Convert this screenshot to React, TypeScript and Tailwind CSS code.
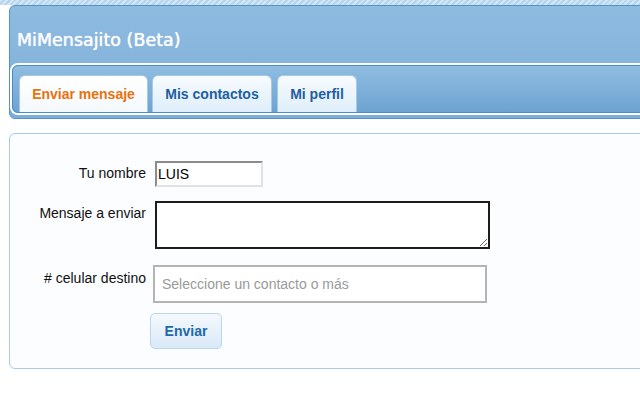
import React from "react";

/**
 * MiMensajito (Beta) — the "send a message" screen.
 * A blue framed header with tabs, then a light form panel.
 */
export default function App() {
  return (
    <div className="h-[400px] w-[640px] overflow-hidden bg-white font-['Liberation_Sans',Arial,sans-serif]">
      {/* hatched strip along the very top */}
      <div className="h-[5px] bg-[repeating-linear-gradient(135deg,#d3e6f5_0px,#d3e6f5_2px,#b7d4ed_2px,#b7d4ed_4px)]" />

      <Header />

      <FormPanel />
    </div>
  );
}

function Header() {
  return (
    <div className="ml-[9px] mr-[-12px] flex h-[114px] flex-col rounded-l-[6px] border border-[#5293cf] bg-gradient-to-b from-[#8ebbe0] to-[#7eaed8] pb-[3px] pl-[2px]">
      <div className="flex h-[56px] items-center pl-[5px] pt-[13px] font-['DejaVu_Sans',Verdana,sans-serif] text-[17.5px] text-white [text-shadow:0_0_1px_#ffffff]">
        MiMensajito (Beta)
      </div>
      <div className="mt-[3px] flex h-[48px] items-end gap-[4px] rounded-l-[6px] border border-[#4a8dcd] bg-gradient-to-b from-[#90bde1] to-[#6ea3d1] pl-[6px] shadow-[0_0_0_2px_#ffffff]">
        <Tab label="Enviar mensaje" width="w-[129px]" active />
        <Tab label="Mis contactos" width="w-[120px]" />
        <Tab label="Mi perfil" width="w-[80px] ml-[1px]" />
      </div>
    </div>
  );
}

function Tab({ label, width, active = false }: { label: string; width: string; active?: boolean }) {
  return (
    <div
      className={
        active
          ? `${width} flex h-[37px] items-center justify-center rounded-t-[6px] border border-b-0 border-[#a5c9e8] bg-gradient-to-b from-white to-[#f4f9fd] text-[14px] font-bold text-[#e8720c]`
          : `${width} flex h-[37px] items-center justify-center rounded-t-[6px] border border-b-0 border-[#a5c9e8] bg-gradient-to-b from-[#f7fbfe] to-[#dfeefa] text-[14px] font-bold text-[#1d5f9f]`
      }
    >
      {label}
    </div>
  );
}

function FormPanel() {
  return (
    <div className="ml-[9px] mr-[-12px] mt-[14px] h-[236px] rounded-l-[6px] border border-[#a8cbea] bg-[#fbfdfe] pt-[27px]">
      <div className="grid grid-cols-[136px_auto] items-start gap-x-[9px] text-[14px] text-[#111]">
        <div className="pt-[2px] text-right">Tu nombre</div>
        <input
          defaultValue="LUIS"
          className="h-[26px] w-[108px] border-2 border-b-[#e2e2e2] border-l-[#8c8c8c] border-r-[#e2e2e2] border-t-[#8c8c8c] bg-white pl-[1px] text-[14px] text-black outline-none"
        />

        <div className="mt-[14px] pt-[2px] text-right">Mensaje a enviar</div>
        <textarea className="mt-[14px] h-[48px] w-[335px] border-2 border-[#1c1c1c] bg-white outline-none" />

        <div className="mt-[16px] pt-[3px] text-right"># celular destino</div>
        <input
          placeholder="Seleccione un contacto o más"
          className="ml-[-2px] mt-[16px] h-[38px] w-[334px] border-2 border-[#b4b4b4] bg-white px-[7px] text-[14px] outline-none placeholder:text-[#9a9a9a]"
        />

        <div />
        <button className="ml-[-5px] mt-[10px] h-[36px] w-[72px] rounded-[5px] border border-[#bad5ee] bg-gradient-to-b from-[#f4f9fd] to-[#dae9f7] text-[14px] font-bold text-[#1f69a8]">
          Enviar
        </button>
      </div>
    </div>
  );
}
